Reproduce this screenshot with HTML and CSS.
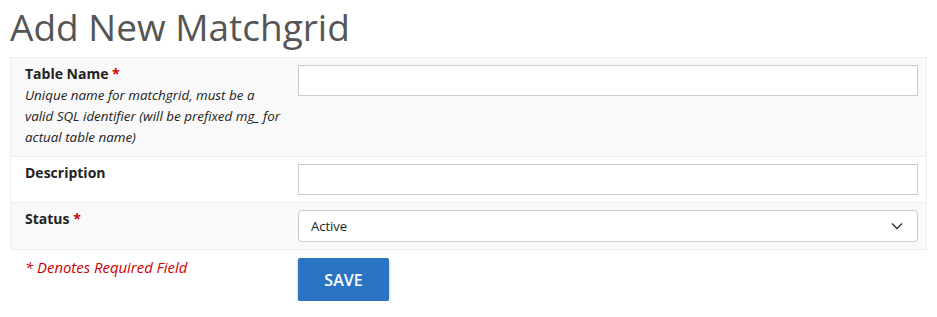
FILE: index.html
```html
<!DOCTYPE html>
<html lang="en">
<head>
  <meta charset="UTF-8" />
  <title>Add New Matchgrid</title>
  <link rel="stylesheet" href="styles.css">
</head>
<body>
  <h1>Add New Matchgrid</h1>
  <form class="mg-form">
    <table class="form-table">
      <tr>
        <th>
          <div class="label">Table Name <span class="req">*</span></div>
          <div class="help">Unique name for matchgrid, must be a valid SQL identifier (will be prefixed mg_ for actual table name)</div>
        </th>
        <td><input type="text"></td>
      </tr>
      <tr>
        <th><div class="label">Description</div></th>
        <td><input type="text"></td>
      </tr>
      <tr>
        <th><div class="label">Status <span class="req">*</span></div></th>
        <td>
          <div class="select-wrap">
            <select>
              <option>Active</option>
              <option>Suspended</option>
            </select>
            <svg class="chevron" width="12" height="8" viewBox="0 0 12 8"><path d="M1 1.5l5 5 5-5" fill="none" stroke="#333" stroke-width="1.4"/></svg>
          </div>
        </td>
      </tr>
    </table>
    <div class="form-footer">
      <div class="req-note">* Denotes Required Field</div>
      <button type="button" class="btn-save">Save</button>
    </div>
  </form>
</body>
</html>
```

FILE: styles.css
```css
body {
  margin: 0;
  padding: 0 10px;
  font-family: "Open Sans", "Noto Sans", sans-serif;
  color: #222;
  background: #fff;
}
h1 {
  margin: 0;
  padding-top: 2px;
  font-size: 37px;
  font-weight: 400;
  line-height: 50px;
  color: #555;
}
.form-table {
  width: 917px;
  margin-top: 5px;
  border-collapse: collapse;
  border: 1px solid #eee;
}
.form-table tr:nth-child(odd) {
  background: #f9f9f9;
}
.form-table tr + tr {
  border-top: 1px solid #eee;
}
.form-table th {
  width: 260px;
  padding: 5px 13px 8px 14px;
  text-align: left;
  vertical-align: top;
  font-weight: normal;
}
.form-table td {
  padding: 7px 8px 7px 0;
  vertical-align: top;
}
.label {
  font-size: 14px;
  font-weight: 700;
  line-height: 22px;
  color: #222;
}
.req {
  color: #c00;
}
.help {
  font-size: 13.4px;
  font-style: italic;
  line-height: 21px;
  color: #222;
}
input {
  display: block;
  box-sizing: border-box;
  width: 100%;
  height: 31px;
  padding: 4px 8px;
  border: 1px solid #ccc;
  background: #fff;
  font-family: inherit;
  font-size: 13px;
}
.select-wrap {
  position: relative;
}
select {
  display: block;
  box-sizing: border-box;
  width: 100%;
  height: 32px;
  padding: 0 12px;
  border: 1px solid #ccc;
  border-radius: 4px;
  background: #fff;
  font-family: inherit;
  font-size: 13px;
  color: #222;
  appearance: none;
  -webkit-appearance: none;
}
.chevron {
  position: absolute;
  right: 15px;
  top: 12px;
  pointer-events: none;
}
.form-footer {
  display: flex;
  padding-top: 8px;
}
.req-note {
  width: 273px;
  padding-left: 15px;
  font-size: 14.9px;
  font-style: italic;
  color: #c00;
  line-height: 18px;
}
.btn-save {
  width: 91px;
  height: 43px;
  border: none;
  border-radius: 2px;
  background: #2b74c3;
  color: #fff;
  font-family: inherit;
  font-size: 16px;
  font-weight: 600;
  text-transform: uppercase;
  box-shadow: 0 2px 3px rgba(0,0,0,0.3);
  cursor: pointer;
}
```
